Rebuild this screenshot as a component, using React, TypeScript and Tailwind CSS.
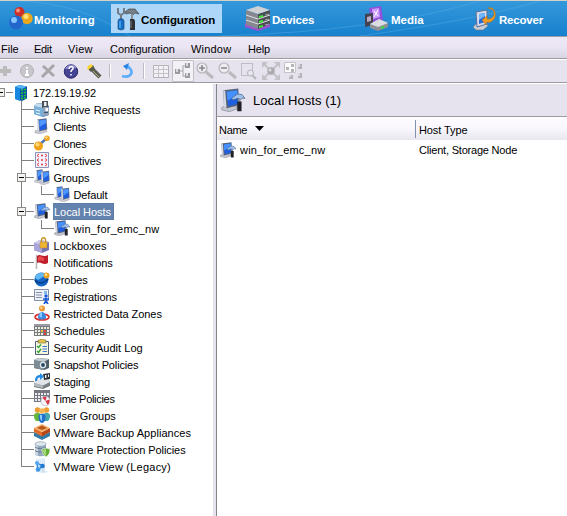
import React from "react";

type Name =
  | "server" | "archive" | "client" | "clones" | "directives" | "group" | "host" | "lock" | "flag"
  | "probe" | "reg" | "person" | "schedule" | "audit" | "camera" | "staging" | "time" | "users"
  | "box" | "protect" | "view";

const Monitor = () => (
  <>
    <path d="M1 13l4-2 7 1 1 1.500-7 2.300-5-1z" fill="#cfd1d8" stroke="#8b8f9c" strokeWidth=".5" />
    <path d="M3 1.500L12.500.3l.8 11.200L5 13.500l-2-1.300z" fill="#5d6985" />
    <path d="M3 1.500l1.500.3.8 11.500L3 12.500z" fill="#d9dee8" />
    <path d="M5.200 2.500l6.500-1 .6 9.200-6.300 1.500z" fill="#1d5fe0" />
    <path d="M5.200 2.500l6.500-1 .3 3.500-6.400 4z" fill="#4e97ff" />
  </>
);

const HostArt = () => (
  <>
    <path d="M.5 13l3-1.500 7 .5 0 2-5 1.800-5-1.300z" fill="#c5c7cf" stroke="#8b8f9c" strokeWidth=".5" />
    <path d="M1.500 1.500L11.500.3l.8 11L4 13.500l-2-1.300z" fill="#56617c" />
    <path d="M1.500 1.500l1.300.3.9 11.300-1.700-.6z" fill="#d3d8e2" />
    <path d="M3.800 2.500l7-1 .6 9-6.500 1.700z" fill="#1d5fe0" />
    <path d="M3.800 2.500l7-1 .2 3-6.700 4z" fill="#4591ff" />
    <path d="M7 6.800l4-2.800 3 .4 2 2.600-1.500-.3-1.500.9-1.700-.7-3.300 1z" fill="#9dc2ee" stroke="#4f6386" strokeWidth=".5" />
    <path d="M11.300 7.500h1.700v2h-1.700z" fill="#8a92a0" />
    <path d="M10.800 9h2.900v6.500h-2.900z" fill="#202228" />
  </>
);

const art: Record<Name, React.ReactNode> = {
  server: (
    <>
      <path d="M2 2l4-2 8 1.500v12L9 16l-7-2z" fill="#0b4fae" />
      <path d="M2 2l4-2 8 1.500L9 4z" fill="#56b4f5" />
      <path d="M2 2l5 1.500V16l-5-2z" fill="#1688df" />
      <path d="M8 5h2M11 4.500h2M8 8h2M11 7.500h2M8 11h2M11 10.500h2M8 13.500h2M11 13h2" stroke="#20d02c" strokeWidth="1.500" />
    </>
  ),
  archive: (
    <>
      <path d="M0 5l3-3 9 1 3 2v9l-6 2-9-3z" fill="#4d7ba8" />
      <path d="M0 5l9 2v9l-9-3z" fill="#79b1dc" />
      <path d="M0 5l3-3 9 2-3 3z" fill="#c3def0" />
      <path d="M2 9l4 1M2 12l4 1" stroke="#e9f6ff" />
      <path d="M8 0h6v7H8z" fill="#4b5058" />
      <path d="M10 1h2.500v4H10z" fill="#edf1f3" />
      <path d="M9 6h6v8l-6 1z" fill="#8fa3ba" />
      <path d="M11.500 7h2.500v3h-2.500z" fill="#fff" />
      <path d="M10 11h4v1h-4z" fill="#3c526f" />
    </>
  ),
  client: <Monitor />,
  clones: (
    <>
      <path d="M5 10L13 3" stroke="#4775b5" strokeWidth="2.500" />
      <circle cx="4.500" cy="11" r="4.500" fill="#f0a21c" />
      <circle cx="3.500" cy="9.500" r="2" fill="#ffd978" />
      <circle cx="13" cy="3.200" r="2.800" fill="#efa622" />
      <circle cx="12.500" cy="2.500" r="1.100" fill="#ffe49a" />
    </>
  ),
  directives: (
    <>
      <path d="M1.500.5h13v15h-13z" fill="#eff2ff" stroke="#8a95b8" />
      <path d="M5 2L3 3.500 5 5M11 2l2 1.500L11 5M5 6.500L3 8l2 1.500M11 6.500l2 1.500-2 1.500M5 11l-2 1.500L5 14M11 11l2 1.500-2 1.500" fill="none" stroke="#ef3b45" />
      <path d="M7 3.500h2M7 8h2M7 12.500h2" stroke="#ef3b45" strokeWidth="1.300" />
    </>
  ),
  group: (
    <>
      <g transform="translate(0 0) scale(.68 .88)"><Monitor /></g>
      <g transform="translate(5 1.500) scale(.8 .9)"><Monitor /></g>
    </>
  ),
  host: <HostArt />,
  lock: (
    <>
      <path d="M0 6l6-3 9 2v8l-7 3-8-3z" fill="#7775b4" />
      <path d="M0 6l8 2v8l-8-3z" fill="#aaa6dc" />
      <path d="M0 6l6-3 9 2-7 3z" fill="#d1cdf0" />
      <path d="M7.500 6V3c0-3 4-3 4 0v3" fill="none" stroke="#ca952c" strokeWidth="1.400" />
      <path d="M6 5h7v6H6z" fill="#f0b734" stroke="#aa792b" strokeWidth=".5" />
    </>
  ),
  flag: (
    <>
      <path d="M2.500 1v14" stroke="#b5b5b5" strokeWidth="1.500" />
      <path d="M3 2c4-3 5 2 11-1v8c-5 3-7-2-11 0z" fill="#bf1f2c" />
      <path d="M4 3c3-2 4 1 6 1v3c-2 0-3-1-6 0z" fill="#e84a50" />
    </>
  ),
  probe: (
    <>
      <circle cx="7.500" cy="8.500" r="7" fill="#1466c6" />
      <path d="M1 7c1-5 8-7 11-3L4 9z" fill="#60b8f4" />
      <path d="M1 9c4 5 10 3 13-1" stroke="#073b88" fill="none" strokeWidth="1.500" />
      <circle cx="12.500" cy="4.500" r="3" fill="#eda01d" />
      <circle cx="12" cy="3.800" r="1.200" fill="#ffe596" />
    </>
  ),
  reg: (
    <>
      <path d="M.5 1.500h14v11H.5z" fill="#eef1f8" stroke="#818fa9" />
      <path d="M2 4.500h6M2 7h6M2 9.500h6" stroke="#8490ab" />
      <path d="M10 3h3v3h-3z" fill="#83b7ea" />
      <circle cx="12" cy="8" r="1.700" fill="#1557d8" />
      <path d="M9 11h6M12 10v3l-2 3M12 13l2 3" stroke="#1557d8" strokeWidth="1.700" fill="none" />
    </>
  ),
  person: (
    <>
      <ellipse cx="8" cy="12" rx="7" ry="3" fill="#fff" stroke="#dd3333" strokeWidth="1.700" />
      <path d="M4 13c0-8 8-8 8 0-2 2-6 2-8 0z" fill="#3789df" />
      <path d="M5 11c1-3 2-4 3-4v6z" fill="#8fc8ff" />
      <circle cx="8" cy="3.500" r="3" fill="#e99a36" />
      <circle cx="7.300" cy="2.800" r="1.200" fill="#ffd38a" />
    </>
  ),
  schedule: (
    <>
      <path d="M0 2h16v12H0z" fill="#777a80" />
      <path d="M0 2h16v2H0z" fill="#9a9ca2" />
      <path d="M1 5h2v2H1zm3 0h2v2H4zm3 0h2v2H7zm3 0h2v2h-2zm3 0h2v2h-2zM1 8h2v2H1zm3 0h2v2H4zm9 0h2v2h-2zM1 11h2v2H1zm3 0h2v2H4zm3 0h2v2H7zm6 0h2v2h-2z" fill="#f0eedc" />
      <path d="M7 8h2v2H7z" fill="#f2bb35" />
      <path d="M10 8h2v2h-2zM10 11h2v2h-2z" fill="#e23b30" />
    </>
  ),
  audit: (
    <>
      <path d="M1.500 2.500h13v13h-13z" fill="#f6f7df" stroke="#52617b" />
      <path d="M4 1h2l1-1h2l1 1h2v3H4z" fill="#e3c14a" stroke="#6e6841" strokeWidth=".6" />
      <path d="M3 7l1.500 1.500L7 5.500M3 12l1.500 1.500L7 10" stroke="#2ba239" strokeWidth="1.400" fill="none" />
      <path d="M8.500 7.500H13M8.500 10H13M8.500 12.500H13" stroke="#3d73cb" />
    </>
  ),
  camera: (
    <>
      <path d="M0 4l4-2 11 1v9l-5 2-10-2z" fill="#4e5d68" />
      <path d="M0 4l10 2v8L0 12z" fill="#7c8b94" />
      <path d="M0 4l4-2 11 1-5 3z" fill="#c4cdd2" />
      <circle cx="9" cy="9" r="3.200" fill="#dfe9ef" />
      <circle cx="9" cy="9" r="1.900" fill="#254662" />
    </>
  ),
  staging: (
    <>
      <path d="M0 10l4-4h10l2 3v4l-7 3-9-2z" fill="#787e84" />
      <path d="M0 10l4-4h10l2 3-7 3.500z" fill="#e1e5e9" />
      <path d="M0 10l9 2.500V15l-9-2z" fill="#b2b9bf" />
      <path d="M9 1l7-1v6l-6 1z" fill="#30343c" />
      <path d="M11 2h1.500v3H11zM14 1.500h1V4h-1z" fill="#eee" />
      <path d="M1 8C1 4 3 2 6 2V0l4 3.500L6 7V4.500C4 4.500 3 6 3 8z" fill="#248be2" />
    </>
  ),
  time: (
    <>
      <path d="M0 0h16v12H0z" fill="#74777f" />
      <path d="M1 3h2v2H1zm3 0h2v2H4zm3 0h2v2H7zm3 0h2v2h-2zm3 0h2v2h-2zM1 6h2v2H1zm3 0h2v2H4zm3 0h2v2H7zM1 9h2v2H1zm3 0h2v2H4z" fill="#eceef2" />
      <circle cx="11.500" cy="11" r="4.700" fill="#f3f3f8" stroke="#a8aab9" strokeWidth=".6" />
      <path d="M11.500 11L8.500 8c1-1 3-1.500 4-1zM11.500 11l4-1.500c.5 2-.5 4.500-2 5.300z" fill="#d83442" />
    </>
  ),
  users: (
    <>
      <circle cx="3.500" cy="3" r="2.700" fill="#ed9c33" />
      <circle cx="12.500" cy="3" r="2.700" fill="#ed9c33" />
      <path d="M0 8c1-3 6-3 7 0v6H2c-2-2-2-4-2-6z" fill="#64b83c" />
      <path d="M9 8c1-3 6-3 7 0 0 2 0 4-2 6H9z" fill="#45a8ae" />
      <circle cx="8" cy="4" r="2.800" fill="#f6b653" />
      <path d="M4.500 9c1-3 6-3 7 0 0 4-1 7-3.500 7S4.500 13 4.500 9z" fill="#246ed1" />
      <path d="M6 8h2v6c-2-1-2-4-2-6z" fill="#8fd1ff" />
    </>
  ),
  box: (
    <>
      <path d="M0 8l8 4 8-4v4l-8 4-8-4z" fill="#3479a5" />
      <path d="M0 4l8 4v4.500L0 8z" fill="#e46a28" />
      <path d="M8 8l8-4v4l-8 4.500z" fill="#b64717" />
      <path d="M0 4l8-4 8 4-8 4z" fill="#f7b067" />
      <path d="M3 4l5-2.500L13 4 8 6z" fill="#bb561c" />
    </>
  ),
  protect: (
    <>
      <path d="M1 3v10c0 3 11 3 11 0V3z" fill="#94a8bd" />
      <path d="M1 3v10c0 1 1 2 3 2V4z" fill="#cbd7e3" />
      <ellipse cx="6.500" cy="3" rx="5.500" ry="2.300" fill="#dee6ee" stroke="#8192a5" strokeWidth=".6" />
      <path d="M1 6c2 2 9 2 11 0M1 9.500c2 2 9 2 11 0" stroke="#62778b" fill="none" />
      <path d="M12 7l4 1c0 4-1 6-4 8-3-2-4-4-4-8z" fill="#61ad36" stroke="#eef6e8" strokeWidth=".7" />
      <path d="M12 8v7c-2-2-3-3-3-6z" fill="#a5d879" />
    </>
  ),
  view: (
    <>
      <path d="M2 1l9-1v15l-9-1z" fill="#dcecfb" />
      <path d="M11 0v13l4 1-8 1z" fill="#d5e2f2" />
      <path d="M3 5l6 3-5 4z" fill="#b9dcfa" stroke="#3386dc" strokeWidth="1.300" />
      <circle cx="3" cy="5" r="2" fill="#55a8ed" />
      <circle cx="8.500" cy="8" r="2.300" fill="#247ad1" />
      <circle cx="4" cy="11.500" r="2.300" fill="#4198e4" />
    </>
  ),
};

function Icon({ name, className = "size-4" }: { name: Name; className?: string }) {
  return <svg viewBox="0 0 16 16" className={"block shrink-0 " + className}>{art[name]}</svg>;
}

const rows: { text: string; icon: Name; track: string; child?: boolean; open?: boolean; selected?: boolean }[] = [
  { text: "Archive Requests", icon: "archive", track: "tracking-[0.05px]" },
  { text: "Clients", icon: "client", track: "tracking-[-0.15px]" },
  { text: "Clones", icon: "clones", track: "tracking-[-0.2px]" },
  { text: "Directives", icon: "directives", track: "tracking-[-0.05px]" },
  { text: "Groups", icon: "group", track: "tracking-[0px]", open: true },
  { text: "Default", icon: "group", track: "tracking-[-0.15px]", child: true },
  { text: "Local Hosts", icon: "host", track: "tracking-[-0.05px]", open: true, selected: true },
  { text: "win_for_emc_nw", icon: "host", track: "tracking-[0.25px]", child: true },
  { text: "Lockboxes", icon: "lock", track: "tracking-[0.05px]" },
  { text: "Notifications", icon: "flag", track: "tracking-[-0.05px]" },
  { text: "Probes", icon: "probe", track: "tracking-[-0.1px]" },
  { text: "Registrations", icon: "reg", track: "tracking-[-0.05px]" },
  { text: "Restricted Data Zones", icon: "person", track: "tracking-[-0.05px]" },
  { text: "Schedules", icon: "schedule", track: "tracking-[0px]" },
  { text: "Security Audit Log", icon: "audit", track: "tracking-[0.03px]" },
  { text: "Snapshot Policies", icon: "camera", track: "tracking-[-0.15px]" },
  { text: "Staging", icon: "staging", track: "tracking-[-0.1px]" },
  { text: "Time Policies", icon: "time", track: "tracking-[-0.3px]" },
  { text: "User Groups", icon: "users", track: "tracking-[0px]" },
  { text: "VMware Backup Appliances", icon: "box", track: "tracking-[0.05px]" },
  { text: "VMware Protection Policies", icon: "protect", track: "tracking-[-0.07px]" },
  { text: "VMware View (Legacy)", icon: "view", track: "tracking-[0.23px]" },
];

function Minus({ className }: { className: string }) {
  return (
    <span className={"absolute flex size-[9px] items-center justify-center border border-[#888] bg-[#f4f2ee] " + className}>
      <span className="h-px w-[5px] bg-black" />
    </span>
  );
}

function Tree() {
  return (
    <div className="w-[213px] shrink-0 overflow-hidden bg-white">
      <div className="relative flex h-[17px] items-center">
        <Minus className="-left-[4px] top-[4px]" />
        <span className="ml-[6px] h-px w-[7px] bg-[#808080]" />
        <Icon name="server" />
        <span className="ml-[4px] whitespace-nowrap pt-[2px] leading-[15px] tracking-[-0.1px]">172.19.19.92</span>
      </div>
      {rows.map((r, i) => (
        <div key={r.text} className="flex h-[17px]">
          <div className={"relative ml-[21px] flex shrink-0 " + (r.child ? "w-[33px]" : "w-[13px]")}>
            <span
              className={
                "w-px " + (r.child ? "mr-[19px] " : "") + (i === rows.length - 1 ? "h-[9px] bg-[#808080]" : "h-full bg-[#808080]")
              }
            />
            <span className={"h-[9px] flex-1 border-b border-[#808080] " + (r.child ? "border-l" : "")} />
            {r.open && <Minus className="-left-[4px] top-[4px]" />}
          </div>
          <Icon name={r.icon} />
          <span
            className={
              "ml-[3px] h-[17px] whitespace-nowrap border-y border-r leading-[16px] " + r.track + " " +
              (r.selected ? "w-[61px] border-[#5c7ba6] bg-[#6382ad] pl-px text-white" : "border-transparent pl-[0.5px]")
            }
          >
            {r.text}
          </span>
        </div>
      ))}
    </div>
  );
}

function Header() {
  return (
    <div className="relative flex h-[35px] items-center overflow-hidden bg-linear-to-b from-[#3498db] to-[#1681ce] text-[11.500px] font-bold text-white">
      <svg className="absolute inset-0" width="567" height="35">
        <path d="M20 0Q80 2 130 35M220 35Q380 30 480 0M360 35Q470 20 540 0" stroke="#69b7e9" strokeOpacity=".35" fill="none" />
      </svg>
      <div className="relative flex w-[111px] items-center pl-[9px]">
        <svg width="24" height="24" viewBox="0 0 24 24" className="shrink-0">
          <circle cx="10.500" cy="5" r="5" fill="#cc3028" />
          <circle cx="9" cy="3.500" r="2" fill="#ff8e7a" />
          <circle cx="18" cy="11.500" r="5.700" fill="#eba71e" />
          <circle cx="17" cy="9.500" r="2.500" fill="#ffe077" />
          <circle cx="7" cy="15.500" r="7" fill="#2467cc" />
          <circle cx="5" cy="13" r="3" fill="#83c5ff" />
        </svg>
        <span className="ml-[1px] pt-[4px] tracking-[0.15px]">Monitoring</span>
      </div>
      <div className="relative flex h-[29px] w-[111px] items-center bg-[#add6f8] text-black">
        <svg width="24" height="24" viewBox="0 0 24 24" className="ml-[5px] shrink-0">
          <path d="M2 1v5l3 2 3-2V1M5 7v6" fill="none" stroke="#727d8a" strokeWidth="2" />
          <path d="M3 12h4l1 2v8l-3 1-3-1v-8z" fill="#1670cb" stroke="#123b68" strokeWidth=".6" />
          <path d="M4 14v7" stroke="#6dc8ff" />
          <path d="M9 5l4-3h6l4 5-4-1-2 2-3-2-4 1z" fill="#777f87" stroke="#333" strokeWidth=".6" />
          <path d="M15 7h2v6h-2z" fill="#8b9095" />
          <path d="M14 12h4l1 2v9h-5z" fill="#2d3034" />
          <path d="M15 14v7" stroke="#858585" />
        </svg>
        <span className="ml-[1px] pt-[4px] tracking-[-0.1px]">Configuration</span>
      </div>
      <div className="relative ml-[23px] flex w-[119px] items-center">
        <svg width="25" height="25" viewBox="0 0 25 25" className="shrink-0">
          <path d="M0 17l13 4 12-4v4l-12 4-13-4z" fill="#9c50d4" />
          <path d="M1 4l12 4v15L1 19z" fill="#858890" />
          <path d="M13 8l12-4v14l-12 5z" fill="#484e53" />
          <path d="M1 4L13 0l12 4-12 4z" fill="#cfd1d4" />
          <path d="M1 9l12 4 12-4M1 14l12 4 12-4" stroke="#dfdfe3" fill="none" />
          <path d="M14 11l4-1M14 16l4-1M14 21l4-1" stroke="#43e934" strokeWidth="2" />
          <path d="M20 9l4-1M20 14l4-1M20 19l4-1" stroke="#aaa" />
        </svg>
        <span className="ml-[2px] pt-[4px] tracking-[-0.2px]">Devices</span>
      </div>
      <div className="relative flex w-[109px] items-center">
        <svg width="25" height="25" viewBox="0 0 25 25" className="shrink-0">
          <path d="M5 2l12-2 2 14-12 3z" fill="#9250dd" />
          <path d="M8 3l7-1 1 9-7 2z" fill="#c99bff" />
          <path d="M10 5l4 5M14 4l-4 7" stroke="#fff" />
          <path d="M1 8l8-1v12l-8 2z" fill="#44424e" />
          <path d="M3 11l4-1v5l-4 1z" fill="#b8abc3" />
          <path d="M6 18l9-5 9 4v4l-10 4-8-3z" fill="#8c9197" />
          <path d="M6 18l9-5 9 4-10 4z" fill="#dadde1" />
          <path d="M17 22l3-1" stroke="#36db3c" strokeWidth="2" />
        </svg>
        <span className="ml-[2px] pt-[4px] tracking-[0px]">Media</span>
      </div>
      <div className="relative flex items-center">
        <svg width="24" height="24" viewBox="0 0 24 24" className="shrink-0">
          <path d="M0 20l4-4h9l2 3-5 4H3z" fill="#c8ccd3" stroke="#64738b" strokeWidth=".6" />
          <path d="M3 5l11-2v14l-10 3z" fill="#d7dce7" stroke="#526e9b" />
          <path d="M6 7l6-1v9l-6 2z" fill="#256ad9" />
          <path d="M6 7l6-1v3l-6 4z" fill="#72b6ff" />
          <path d="M15 1c7-2 9 7 6 11-2 3-5 4-8 3v3l-4-5 5-4v3c5 1 9-4 6-9-1-1-3-1-5-2z" fill="#f29c24" stroke="#b66b13" strokeWidth=".5" />
        </svg>
        <span className="ml-[2px] pt-[4px] tracking-[-0.2px]">Recover</span>
      </div>
    </div>
  );
}

function Toolbar() {
  return (
    <div className="h-[22px] bg-[#e6e3ee]">
      <svg width="310" height="22" viewBox="0 60 310 22" fill="none">
        <path d="M5 66v10M0 71h11" stroke="#bbb" strokeWidth="4" />
        <circle cx="27" cy="71" r="6.500" fill="#c7c7cb" stroke="#b2b2b5" />
        <path d="M27 67v1.500M27 70v5M25 75h4" stroke="#fff" strokeWidth="2" />
        <path d="M43 66l11 10M54 65L42 77" stroke="#a7a7a9" strokeWidth="3" />
        <circle cx="71" cy="71.500" r="6.700" fill="#454494" stroke="#28286a" />
        <path d="M66 69c2-4 8-4 10-1" stroke="#918fd1" strokeWidth="2" />
        <path d="M69 69c0-3 5-3 4 0-1 1-2 1-2 3M71 74v1.500" stroke="#fff" strokeWidth="1.500" />
        <path d="M93 70l7 7" stroke="#5f6053" strokeWidth="4.500" />
        <path d="M92 70l8 8" stroke="#a9a88a" />
        <path d="M88 66l5-1 2 4-4 3-3-3z" fill="#55584c" />
        <path d="M87 67l4-3 2 2-5 4z" fill="#ffd932" />
        <path d="M109.500 64v14M143.500 63v16" stroke="#bebbc4" />
        <path d="M110.500 64v14M144.500 63v16" stroke="#fff" />
        <path d="M122 76c6 2 11-1 9-6-1-2-2-3-4-4" stroke="#5caefa" strokeWidth="2.700" />
        <path d="M129 63l-2 7-4-4z" fill="#2884e5" />
        <path d="M153.500 65.500h15v12h-15z" fill="#f3f1f5" stroke="#b4b4b8" />
        <path d="M153 69.500h15M153 73.500h15M158.500 65v12M163.500 65v12" stroke="#c4c4c8" />
        <path d="M172.500 60.500h21v21h-21z" fill="#f3f1f6" stroke="#c3c0c8" />
        <path d="M179 71h4M183 65.500v11M183 66h3M183 76h3" stroke="#a5a5ab" />
        <path d="M175 69h5v5h-5zM185 63h5v5h-5zM185 73h5v5h-5z" fill="#9a9aa1" />
        <path d="M176 69h2v3h-2zM186 63h2v3h-2zM186 73h2v3h-2z" fill="#d8d8dd" />
        <path d="M206 72l7 6M229 72l7 6" stroke="#b9b9be" strokeWidth="3" />
        <circle cx="202" cy="68" r="5" fill="#efedf3" stroke="#b4b4b8" strokeWidth="1.200" />
        <circle cx="224" cy="68" r="5" fill="#efedf3" stroke="#b4b4b8" strokeWidth="1.200" />
        <path d="M199 68h6M202 65v6M221 68h6" stroke="#868689" strokeWidth="1.500" />
        <path d="M241.500 63.500h11v12h-11z" stroke="#97979e" strokeDasharray="1 1" />
        <path d="M252 75l4 4" stroke="#b5b5ba" strokeWidth="2" />
        <circle cx="250.500" cy="73" r="3" fill="#e8e6ee" stroke="#b3b3ba" />
        <path d="M264 64l14 14M278 64l-14 14" stroke="#c2c2c7" strokeWidth="2" />
        <path d="M262 62h6l-6 6zM280 62v6l-6-6zM262 80v-6l6 6zM280 80h-6l6-6z" fill="#c2c2c7" />
        <circle cx="271" cy="71" r="3.700" fill="#aaaab0" />
        <circle cx="270" cy="70" r="1.500" fill="#ddd" />
        <path d="M284.500 62.500h11v10h-11z" fill="#fafafa" stroke="#c5c3ca" />
        <path d="M286 67h3v3h-3zM291 64h3v3h-3zM291 69h3v3h-3zM298 64h4v5h-4zM298 73h4v5h-4zM289 75h4v4h-4z" fill="#b4b4ba" />
        <path d="M298 64h2v3h-2zM298 73h2v3h-2zM289 75h2v2h-2z" fill="#d7d7dc" />
      </svg>
    </div>
  );
}

export default function App() {
  return (
    <div className="flex h-[516px] w-[567px] flex-col overflow-hidden bg-white font-['Liberation_Sans',Arial,sans-serif] text-[11px] text-black">
      <div className="h-px bg-[#d4d0c8]" />
      <Header />
      <div className="h-px bg-[#9f9fa5]" />
      <div className="flex h-[21px] items-center bg-linear-to-b from-[#eee9f6] via-[#eae4f3] to-[#d8d4e0] pt-[3px] leading-none">
        <span className="ml-[1px] w-[33px]">File</span>
        <span className="w-[34px] tracking-[-0.3px]">Edit</span>
        <span className="w-[42px] tracking-[0.3px]">View</span>
        <span className="w-[81px] tracking-[-0.05px]">Configuration</span>
        <span className="w-[57px] tracking-[0.2px]">Window</span>
        <span className="tracking-[-0.2px]">Help</span>
      </div>
      <div className="h-px bg-[#9d9ca3]" />
      <div className="h-px bg-white" />
      <Toolbar />
      <div className="h-px bg-[#9d9ca3]" />
      <div className="h-px bg-white" />
      <div className="flex min-h-0 flex-1">
        <Tree />
        <div className="w-[3px] shrink-0 bg-[#e6e3ee]" />
        <div className="min-w-0 flex-1 border-l border-[#85858c]">
          <div className="flex h-[33px] items-center border-b border-[#9d9ca3] bg-[#e6e3ee] pl-[4px]">
            <Icon name="host" className="size-6" />
            <span className="ml-[8px] pt-px text-[13px] tracking-[0.05px]">Local Hosts (1)</span>
          </div>
          <div className="flex h-[23px] items-center bg-linear-to-b from-[#fffcff] via-[#f8f7fd] to-[#e7e7ed]">
            <span className="ml-[2px] w-[36px] pt-[3px] tracking-[-0.3px]">Name</span>
            <svg width="9" height="5" viewBox="0 0 9 5"><path d="M0 0h9L4.500 5z" fill="#000" /></svg>
            <span className="ml-[151px] h-[18px] w-px bg-[#8292ae]" />
            <span className="ml-[3px] pt-[3px] tracking-[-0.1px]">Host Type</span>
          </div>
          <div className="flex h-[19px] items-center pl-[3px]">
            <Icon name="host" />
            <span className="ml-[4px] w-[179px] pt-[2px] tracking-[0.2px]">win_for_emc_nw</span>
            <span className="pt-[2px] tracking-[-0.2px]">Client, Storage Node</span>
          </div>
        </div>
      </div>
    </div>
  );
}
